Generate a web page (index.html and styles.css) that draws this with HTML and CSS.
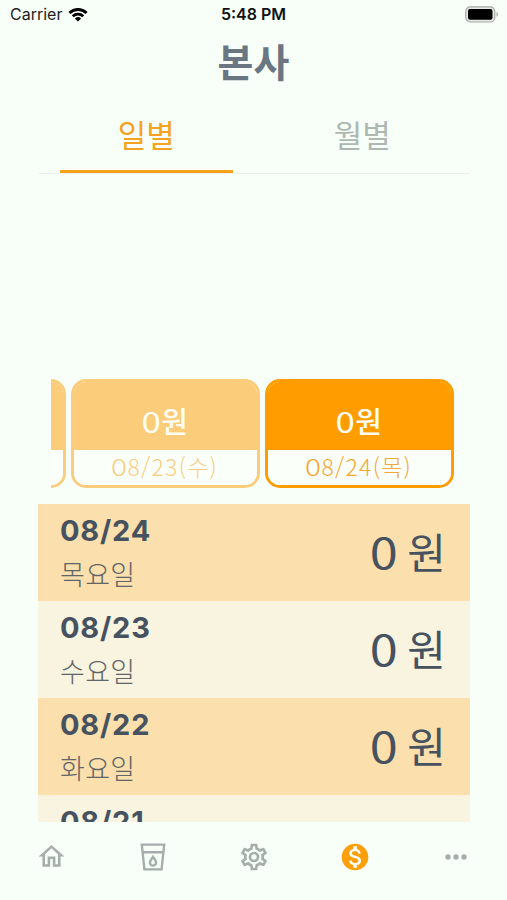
FILE: index.html
```html
<!DOCTYPE html>
<html lang="ko">
<head>
<meta charset="utf-8">
<title>본사</title>
<link rel="stylesheet" href="styles.css">
</head>
<body>
<div class="app">
  <div class="status">
    <div class="carrier"><span>Carrier</span>
      <svg class="wifi" viewBox="0 0 20 15"><path d="M10 14.6 6.9 11.4a4.6 4.6 0 0 1 6.2 0zM5.7 10.2 3.8 8.3a9.1 9.1 0 0 1 12.4 0l-1.9 1.9a6.4 6.4 0 0 0-8.6 0zM2.5 7 .4 4.9a13.9 13.9 0 0 1 19.2 0L17.500 7a11 11 0 0 0-15 0z"/></svg>
    </div>
    <div class="time">5:48 PM</div>
    <svg class="battery" viewBox="0 0 34 17"><rect x=".8" y=".8" width="29" height="15.200" rx="4.500"/><rect class="charge" x="3" y="3" width="24.500" height="10.800" rx="2"/><path class="tip" d="M31.500 5.800q3 2.600 0 5.200z"/></svg>
  </div>
  <h1 class="title">본사</h1>
  <div class="tabs">
    <div class="tab active">일별</div>
    <div class="tab">월별</div>
  </div>
  <div class="cards">
    <div class="card faded"><div class="amount"></div><div class="date"></div></div>
    <div class="card faded"><div class="amount"><span class="zero">0</span>원</div><div class="date"><span class="zero">0</span>8/23(수)</div></div>
    <div class="card"><div class="amount"><span class="zero">0</span>원</div><div class="date"><span class="zero">0</span>8/24(목)</div></div>
  </div>
  <div class="list">
    <div class="row"><div class="day"><div class="md">08/24</div><div class="wd">목요일</div></div><div class="sum"><span class="zero">0</span> 원</div></div>
    <div class="row"><div class="day"><div class="md">08/23</div><div class="wd">수요일</div></div><div class="sum"><span class="zero">0</span> 원</div></div>
    <div class="row"><div class="day"><div class="md">08/22</div><div class="wd">화요일</div></div><div class="sum"><span class="zero">0</span> 원</div></div>
    <div class="row"><div class="day"><div class="md">08/21</div></div></div>
  </div>
  <div class="nav">
    <div class="item"><svg class="home" viewBox="0 0 24 24"><path d="M12 5.690l5 4.500V18h-2v-6H9v6H7v-7.810l5-4.500M12 3L2 12h3v8h6v-6h2v6h6v-8h3L12 3z"/></svg></div>
    <div class="item"><svg class="cup" viewBox="0 0 32 32"><path d="M4.800 3.600H27.200L24.600 28.400H7.400zM5.900 11.300H26.100M16 15.800C14.600 18 12.900 19.700 12.900 21.500a3.100 3.100 0 0 0 6.200 0C19.100 19.700 17.400 18 16 15.800z"/></svg></div>
    <div class="item"><svg viewBox="0 0 24 24"><path d="M12,8A4,4 0 0,1 16,12A4,4 0 0,1 12,16A4,4 0 0,1 8,12A4,4 0 0,1 12,8M12,10A2,2 0 0,0 10,12A2,2 0 0,0 12,14A2,2 0 0,0 14,12A2,2 0 0,0 12,10M10,22C9.75,22 9.54,21.82 9.5,21.58L9.13,18.93C8.5,18.68 7.96,18.34 7.44,17.94L4.95,18.95C4.73,19.03 4.46,18.95 4.34,18.73L2.34,15.27C2.21,15.05 2.27,14.78 2.46,14.63L4.57,12.97L4.5,12L4.57,11L2.46,9.37C2.27,9.22 2.21,8.95 2.34,8.73L4.34,5.27C4.46,5.05 4.73,4.96 4.95,5.05L7.44,6.05C7.96,5.66 8.5,5.32 9.13,5.07L9.5,2.42C9.54,2.18 9.75,2 10,2H14C14.25,2 14.46,2.18 14.5,2.42L14.87,5.07C15.5,5.32 16.04,5.66 16.56,6.05L19.05,5.05C19.27,4.96 19.54,5.05 19.66,5.27L21.66,8.73C21.79,8.95 21.73,9.22 21.54,9.37L19.43,11L19.5,12L19.43,13L21.54,14.63C21.73,14.78 21.79,15.05 21.66,15.27L19.66,18.73C19.54,18.95 19.27,19.04 19.05,18.95L16.56,17.95C16.04,18.34 15.5,18.68 14.87,18.93L14.5,21.58C14.46,21.82 14.25,22 14,22H10M11.25,4L10.88,6.61C9.68,6.86 8.62,7.5 7.85,8.39L5.44,7.35L4.69,8.65L6.8,10.2C6.4,11.37 6.4,12.64 6.8,13.8L4.68,15.36L5.43,16.66L7.86,15.62C8.63,16.5 9.68,17.14 10.87,17.38L11.24,20H12.76L13.13,17.39C14.32,17.14 15.37,16.5 16.14,15.62L18.57,16.66L19.32,15.36L17.2,13.81C17.6,12.64 17.6,11.37 17.2,10.2L19.31,8.65L18.56,7.35L16.15,8.39C15.38,7.5 14.32,6.86 13.12,6.62L12.75,4H11.25Z"/></svg></div>
    <div class="item on"><svg viewBox="0 0 24 24"><path d="M12 2C6.480 2 2 6.480 2 12s4.480 10 10 10 10-4.480 10-10S17.520 2 12 2zm1.410 16.090V20h-2.670v-1.930c-1.710-.36-3.160-1.460-3.270-3.400h1.960c.1 1.050.82 1.870 2.650 1.870 1.960 0 2.400-.98 2.400-1.590 0-.83-.44-1.610-2.670-2.140-2.480-.6-4.180-1.620-4.180-3.670 0-1.720 1.390-2.840 3.110-3.210V4h2.670v1.950c1.860.45 2.790 1.860 2.850 3.390H14.300c-.05-1.110-.64-1.870-2.220-1.870-1.500 0-2.400.68-2.400 1.640 0 .84.65 1.390 2.670 1.910s4.180 1.390 4.180 3.910c-.01 1.830-1.380 2.830-3.120 3.160z"/></svg></div>
    <div class="item"><svg viewBox="0 0 32 32"><circle cx="8" cy="16" r="2.700"/><circle cx="16" cy="16" r="2.700"/><circle cx="24" cy="16" r="2.700"/></svg></div>
  </div>
</div>
</body>
</html>
```
FILE: styles.css
```css
* { box-sizing: border-box; }
body { margin: 0; background: #f8fff8; font-family: "Noto Sans CJK KR", sans-serif; }
.app { width: 507px; height: 900px; overflow: hidden; display: flex; flex-direction: column; }
.status { height: 30px; display: grid; grid-template-columns: 1fr auto 1fr; align-items: center; padding: 0 8px 1px 10px; font: 16px/29px Inter, sans-serif; color: #222; }
.carrier { display: flex; align-items: center; gap: 6px; letter-spacing: 0; }
.wifi { width: 20px; height: 15px; fill: #000; }
.time { font-weight: 600; color: #111; margin-right: 2px; }
.battery { width: 34px; height: 17px; justify-self: end; }
.battery rect { fill: #e4e8e2; stroke: #a5a9a4; stroke-width: 1.2; }
.battery .charge { fill: #000; stroke: none; }
.battery .tip { fill: #a5a9a4; }
.title { height: 66px; margin: 0; text-align: center; font-size: 39px; line-height: 61px; font-weight: 700; color: #6b7683; }
.tabs { height: 78px; margin: 0 37px 0 39px; display: grid; grid-template-columns: 1fr 1fr; border-bottom: 1px solid #ebf2eb; }
.tab { height: 77px; text-align: center; font-size: 31px; line-height: 75px; color: #adb8b3; }
.tab.active { color: #f5a121; border-bottom: 3px solid #f9a11b; margin: 0 22px 0 21px; }
.cards { height: 109px; margin: 205px 53px 0 51px; display: flex; justify-content: flex-end; gap: 5px; overflow: hidden; }
.card { flex: 0 0 189px; height: 109px; border: 3px solid #ff9d00; border-radius: 15px; overflow: hidden; text-align: center; color: #f5a733; }
.faded { border-color: #fbcd7b; color: #f8cd83; }
.amount { height: 68px; background: #ff9d00; color: #fffdf2; font-size: 29px; line-height: 77px; font-weight: 500; }
.faded .amount { background: #fbcd7b; }
.date { height: 35px; font-size: 23px; line-height: 32px; font-weight: 300; letter-spacing: 1.3px; background: #fbfffa; }
.zero { display: inline-block; transform: scaleX(1.2); font-weight: 400; }
.amount .zero { margin-right: 2px; }
.date .zero { font-weight: 300; margin-right: 1px; transform: scaleX(1.3); }
.list { height: 318px; margin: 16px 37px 0 38px; overflow: hidden; }
.row { height: 97px; display: flex; justify-content: space-between; padding: 0 24px 0 22px; background: #fbdfac; color: #46525f; }
.row:nth-child(even) { background: #f8f4df; }
.md { height: 50px; font: 700 29px/54px Inter, sans-serif; letter-spacing: .8px; }
.wd { font-size: 27px; line-height: 40px; font-weight: 300; color: #626568; letter-spacing: .3px; }
.sum { font-size: 42px; line-height: 94px; }
.nav { height: 78px; padding: 0 0 9px 1px; display: grid; grid-template-columns: repeat(5, 1fr); align-items: center; }
.item { display: flex; justify-content: center; fill: #a5aeaa; }
.item svg { width: 32px; height: 32px; }
.item .home { width: 31px; height: 31px; }
.item .cup { fill: none; stroke: #a5aeaa; stroke-width: 2.400; }
.item.on { fill: #ff9f0a; }
```
